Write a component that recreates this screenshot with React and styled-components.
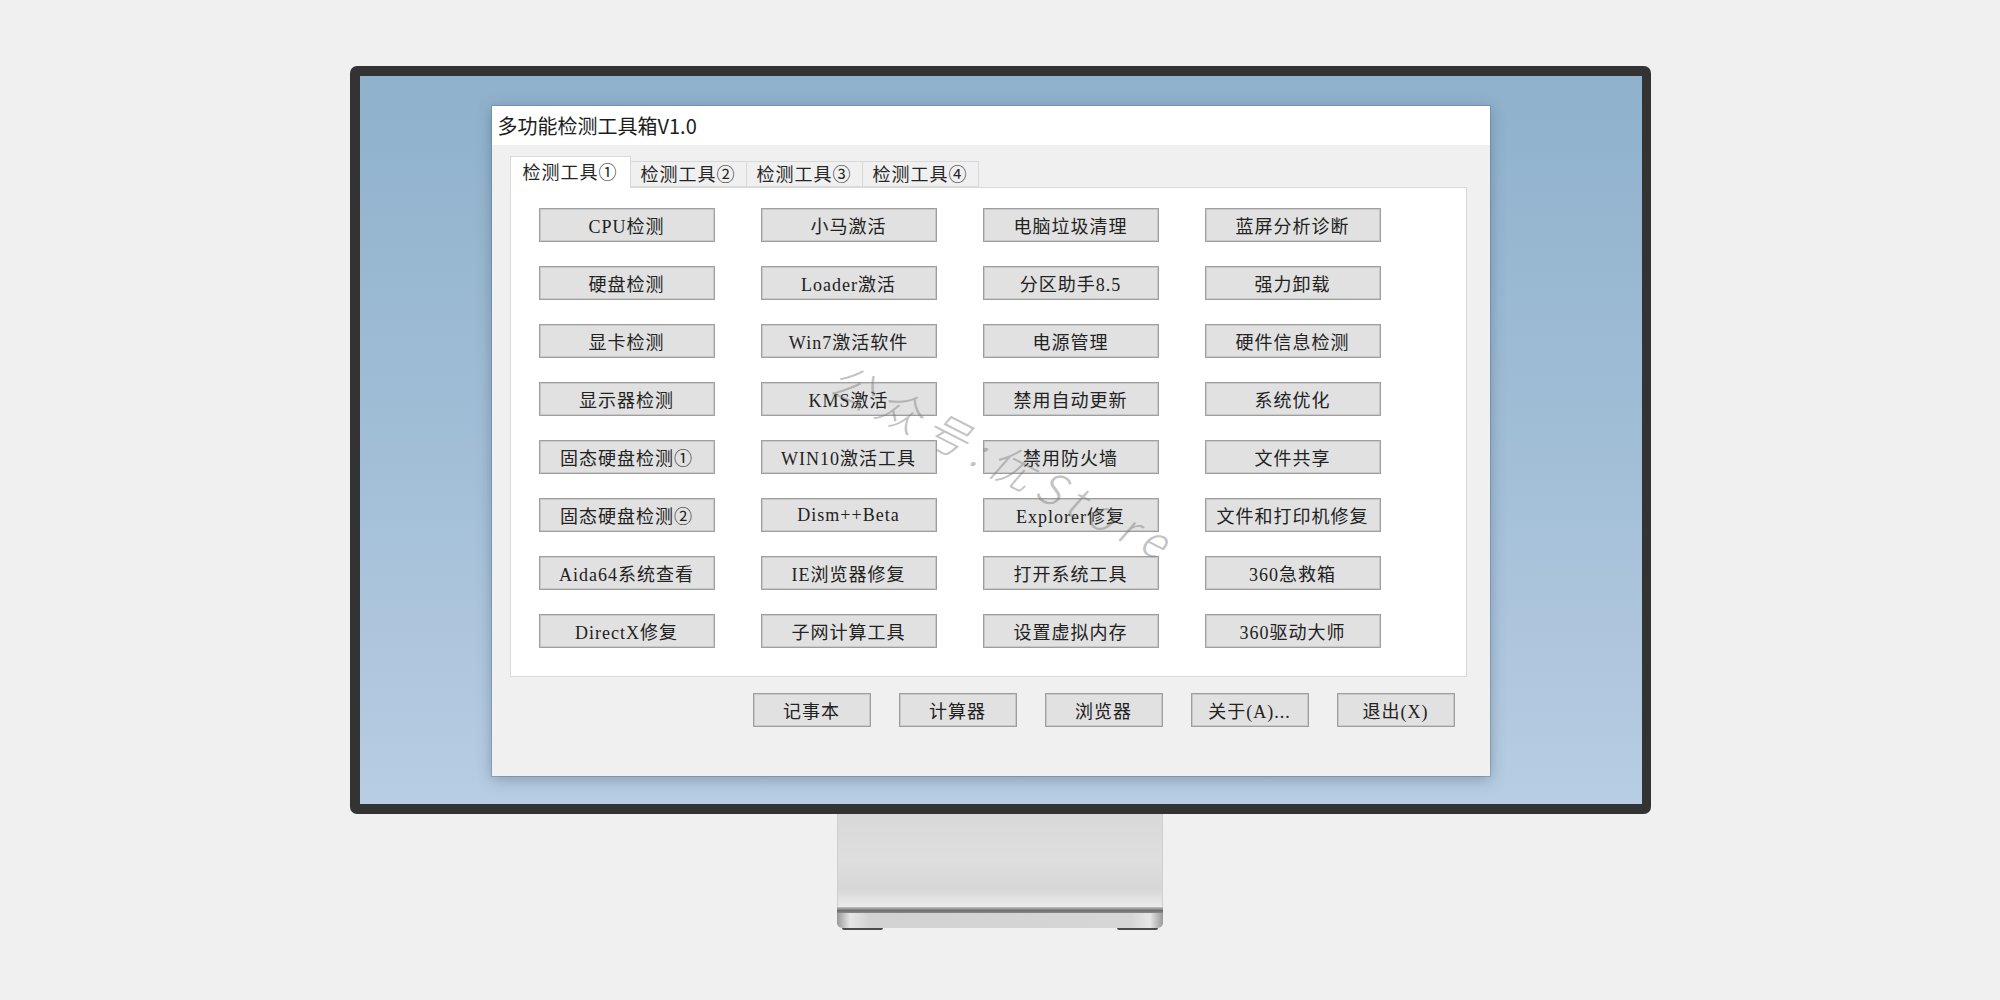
import React from "react";
import styled, { createGlobalStyle } from "styled-components";

const GlobalStyle = createGlobalStyle`
  html, body {
    margin: 0;
    padding: 0;
    background: #f0f0f0;
  }
`

const Page = styled.div`
  width: 2000px;
  height: 1000px;
  display: flex;
  flex-direction: column;
  align-items: center;
  padding-top: 66px;
  box-sizing: border-box;
  background: #f0f0f0;
`

const Bezel = styled.div`
  width: 1301px;
  height: 748px;
  box-sizing: border-box;
  padding: 10px 9px 10px 10px;
  background: #333333;
  border-radius: 7px;
  display: flex;
`

const Screen = styled.div`
  flex: 1;
  padding: 30px 0 0 132px;
  background: linear-gradient(180deg, #8fb1cc 0%, #a3bfd8 55%, #b7cde3 100%);
`

const Window = styled.div`
  position: relative;
  width: 998px;
  height: 670px;
  background: #f0f0f0;
  box-shadow: 0 3px 14px rgba(40, 60, 80, 0.35);
  outline: 1px solid rgba(90, 110, 130, 0.35);
  display: flex;
  flex-direction: column;
`

const TitleBar = styled.div`
  height: 39px;
  background: #ffffff;
  display: flex;
  align-items: center;
  padding-left: 6px;
  font-family: "Noto Sans CJK SC", "Noto Sans", sans-serif;
  font-size: 20px;
  color: #1c1c1c;
`

const Body = styled.div`
  padding: 12px 23px 0 18px;
`

const TabStrip = styled.div`
  height: 31px;
  display: flex;
  align-items: flex-end;
  position: relative;
  z-index: 1;
  margin-bottom: -1px;
`

const Tab = styled.div`
  box-sizing: border-box;
  height: ${p => (p.$active ? "32px" : "26px")};
  padding: ${p => (p.$active ? "4px 12px 0 12px" : "1px 10px 0 10px")};
  margin-bottom: ${p => (p.$active ? "0" : "1px")};
  background: ${p => (p.$active ? "#ffffff" : "#f0f0f0")};
  border: 1px solid #d9d9d9;
  border-bottom: ${p => (p.$active ? "none" : "1px solid #d9d9d9")};
  border-left: ${p => (p.$first ? "1px solid #d9d9d9" : "none")};
  font-family: "Liberation Serif", "Noto Sans CJK SC", serif;
  font-size: 18px;
  letter-spacing: 1px;
  line-height: 24px;
  color: #262626;
  white-space: nowrap;
`

const Panel = styled.div`
  height: 490px;
  box-sizing: border-box;
  border: 1px solid #dadada;
  background: #ffffff;
  padding: 20px 0 0 28px;
`

const ToolGrid = styled.div`
  display: grid;
  grid-template-columns: repeat(4, 176px);
  grid-auto-rows: 34px;
  column-gap: 46px;
  row-gap: 24px;
`

const Btn = styled.div`
  box-sizing: border-box;
  width: ${p => p.$w || 176}px;
  height: 34px;
  background: #e1e1e1;
  border: 1px solid #9e9e9e;
  box-shadow: inset 0 0 0 1px #c9c9c9;
  display: flex;
  align-items: center;
  justify-content: center;
  font-family: "Liberation Serif", "Noto Sans CJK SC", serif;
  font-size: 18px;
  letter-spacing: 1px;
  color: #222;
  white-space: nowrap;
`

const ActionRow = styled.div`
  margin-top: 16px;
  display: flex;
  justify-content: flex-end;
  gap: 28px;
  padding-right: 12px;
`

const Watermark = styled.div`
  position: absolute;
  left: 342px;
  top: 236px;
  transform-origin: left center;
  transform: rotate(27deg);
  font-family: "Noto Sans CJK SC", "DejaVu Sans", sans-serif;
  font-weight: 200;
  font-style: italic;
  font-size: 44px;
  letter-spacing: 9px;
  color: rgba(120, 120, 120, 0.45);
  white-space: nowrap;
  pointer-events: none;
`

const Stand = styled.div`
  width: 326px;
  display: flex;
  flex-direction: column;
`

const Neck = styled.div`
  height: 93px;
  background: linear-gradient(180deg, #d9d9d9 0%, #dedede 50%, #d6d6d6 80%, #ececec 100%);
  border-left: 1px solid #cfcfcf;
  border-right: 1px solid #cfcfcf;
`

const Lip = styled.div`
  height: 6px;
  background: linear-gradient(180deg, #c4c4c4 0%, #6e6e6e 60%, #8a8a8a 100%);
`

const Base = styled.div`
  height: 15px;
  background: linear-gradient(90deg, #9a9a9a 0%, #e6e6e6 4%, #d2d2d2 10%, #d6d6d6 90%, #e6e6e6 96%, #9a9a9a 100%);
  border-radius: 0 0 5px 5px;
`

const Feet = styled.div`
  height: 3px;
  display: flex;
  justify-content: space-between;
  padding: 0 5px;
`

const Foot = styled.div`
  width: 41px;
  height: 2px;
  background: #4a4a4a;
  border-radius: 0 0 2px 2px;
`

const tools = [
  "CPU检测", "小马激活", "电脑垃圾清理", "蓝屏分析诊断",
  "硬盘检测", "Loader激活", "分区助手8.5", "强力卸载",
  "显卡检测", "Win7激活软件", "电源管理", "硬件信息检测",
  "显示器检测", "KMS激活", "禁用自动更新", "系统优化",
  "固态硬盘检测①", "WIN10激活工具", "禁用防火墙", "文件共享",
  "固态硬盘检测②", "Dism++Beta", "Explorer修复", "文件和打印机修复",
  "Aida64系统查看", "IE浏览器修复", "打开系统工具", "360急救箱",
  "DirectX修复", "子网计算工具", "设置虚拟内存", "360驱动大师",
]

const tabs = ["检测工具①", "检测工具②", "检测工具③", "检测工具④"]
const actions = ["记事本", "计算器", "浏览器", "关于(A)...", "退出(X)"]

export default function App() {
  return (
    <>
      <GlobalStyle />
      <Page>
        <Bezel>
          <Screen>
            <Window>
              <TitleBar>多功能检测工具箱V1.0</TitleBar>
              <Body>
                <TabStrip>
                  {tabs.map((t, i) => (
                    <Tab key={t} $active={i === 0} $first={i === 0}>{t}</Tab>
                  ))}
                </TabStrip>
                <Panel>
                  <ToolGrid>
                    {tools.map(t => <Btn key={t}>{t}</Btn>)}
                  </ToolGrid>
                </Panel>
                <ActionRow>
                  {actions.map(a => <Btn key={a} $w={118}>{a}</Btn>)}
                </ActionRow>
              </Body>
              <Watermark>公众号:优Store</Watermark>
            </Window>
          </Screen>
        </Bezel>
        <Stand>
          <Neck />
          <Lip />
          <Base />
          <Feet>
            <Foot />
            <Foot />
          </Feet>
        </Stand>
      </Page>
    </>
  )
}
